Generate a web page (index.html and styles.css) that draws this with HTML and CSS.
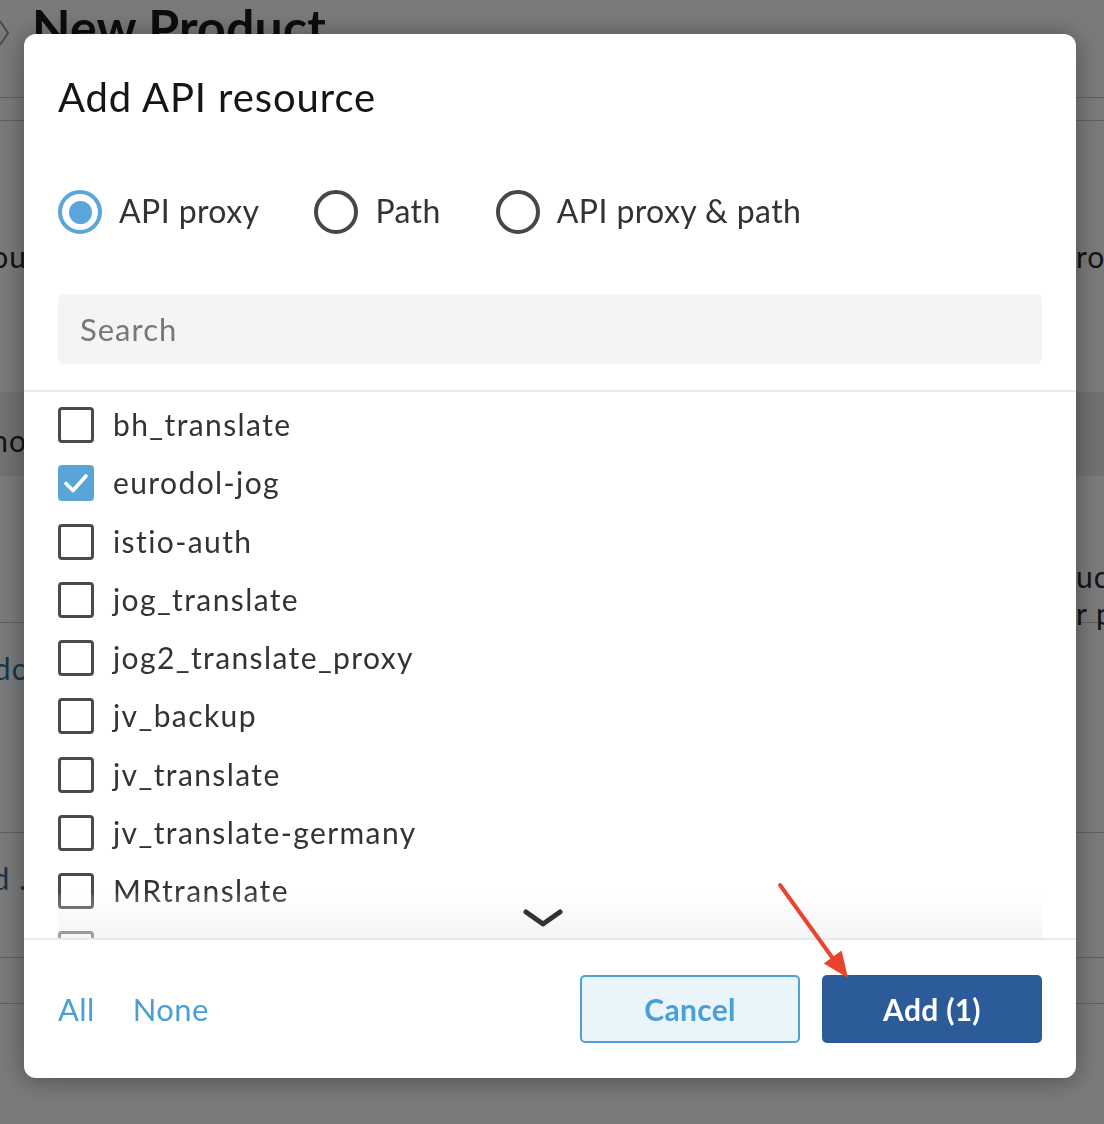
FILE: index.html
```html
<!DOCTYPE html>
<html lang="en">
<head>
<meta charset="utf-8">
<title>Add API resource</title>
<link rel="stylesheet" href="styles.css">
</head>
<body>
<div class="page">
  <div class="page-head">
    <svg class="crumb-chev" width="10" height="30" viewBox="0 0 10 30"><path d="M0 3 L8 15 L0 27" fill="none" stroke="#9a9a9a" stroke-width="2"/></svg>
    <h1 class="page-title">New Product</h1>
  </div>
  <div class="page-row r1"></div>
  <div class="page-row r2"><span class="edge-l">Product resou</span><span class="edge-r">roxies</span></div>
  <div class="page-row r3 band"><span class="edge-l">Anno</span></div>
  <div class="page-row r4"><span class="edge-r stack"><span>uc</span><span>r p</span></span></div>
  <div class="page-row r5"><span class="edge-l link">Adc</span></div>
  <div class="page-row r6"><span class="edge-l link">Add d .</span></div>
  <div class="page-row r7"></div>
</div>

<div class="overlay">
  <div class="dialog">
    <h2 class="dialog-title">Add API resource</h2>

    <div class="radios">
      <label class="radio"><span class="radio-circle checked"><span class="radio-dot"></span></span><span class="radio-label">API proxy</span></label>
      <label class="radio"><span class="radio-circle"></span><span class="radio-label">Path</span></label>
      <label class="radio"><span class="radio-circle"></span><span class="radio-label">API proxy &amp; path</span></label>
    </div>

    <div class="search"><input class="search-input" type="text" placeholder="Search"></div>

    <div class="list">
      <div class="item"><span class="cb"></span><span class="item-label">bh_translate</span></div>
      <div class="item"><span class="cb checked"><svg width="26" height="22" viewBox="0 0 26 22"><path d="M3 11.5 L10 18.5 L23 4" fill="none" stroke="#fff" stroke-width="3.6" stroke-linecap="round" stroke-linejoin="round"/></svg></span><span class="item-label">eurodol-jog</span></div>
      <div class="item"><span class="cb"></span><span class="item-label">istio-auth</span></div>
      <div class="item"><span class="cb"></span><span class="item-label">jog_translate</span></div>
      <div class="item"><span class="cb"></span><span class="item-label">jog2_translate_proxy</span></div>
      <div class="item"><span class="cb"></span><span class="item-label">jv_backup</span></div>
      <div class="item"><span class="cb"></span><span class="item-label">jv_translate</span></div>
      <div class="item"><span class="cb"></span><span class="item-label">jv_translate-germany</span></div>
      <div class="item"><span class="cb"></span><span class="item-label">MRtranslate</span></div>
      <div class="item"><span class="cb"></span><span class="item-label">no_target</span></div>
      <div class="fade">
        <svg width="40" height="20" viewBox="0 0 40 20"><path d="M3 3 L20 15 L37 3" fill="none" stroke="#333" stroke-width="5" stroke-linecap="round" stroke-linejoin="round"/></svg>
      </div>
    </div>

    <div class="footer">
      <div class="links"><a class="link-btn">All</a><a class="link-btn">None</a></div>
      <div class="actions">
        <button class="btn btn-cancel">Cancel</button>
        <button class="btn btn-add">Add (1)</button>
      </div>
    </div>

    <svg class="annot" viewBox="0 0 1052 1044" width="1052" height="1044">
      <line x1="756" y1="851" x2="810" y2="926" stroke="#e8442e" stroke-width="4" stroke-linecap="round"/>
      <polygon points="824,944 799.8,929.5 817.6,916.5" fill="#e8442e"/>
    </svg>
  </div>
</div>
</body>
</html>
```

FILE: styles.css
```css
html, body {
  margin: 0;
  padding: 0;
  height: 100%;
  overflow: hidden;
}

body {
  font-family: Lato, "Noto Sans", sans-serif;
  background: #ffffff;
  color: #333;
}

/* ---------- underlying page ---------- */
.page {
  width: 1104px;
  height: 1124px;
  overflow: hidden;
}

.page-head {
  height: 97px;
  border-bottom: 1px solid #c6c6c6;
  display: flex;
  align-items: flex-start;
}

.crumb-chev {
  margin-top: 18px;
  flex: none;
}

.page-title {
  margin: -2px 0 0 22px;
  font-size: 50px;
  line-height: 58px;
  font-weight: 700;
  letter-spacing: 0.2px;
  color: #1a1a1a;
  white-space: nowrap;
}

.page-row {
  display: flex;
  justify-content: space-between;
  align-items: flex-start;
  font-size: 30px;
  line-height: 36px;
  letter-spacing: 1px;
  color: #2a2a2a;
  white-space: nowrap;
}

.r1 { height: 22px; border-bottom: 1px solid #c6c6c6; }
.r2 { height: 271px; }
.r3 { height: 84px; }
.r4 { height: 146px; border-bottom: 1px solid #c6c6c6; }
.r5 { height: 209px; border-bottom: 1px solid #c6c6c6; }
.r6 { height: 124px; border-bottom: 1px solid #c6c6c6; }
.r7 { height: 45px; border-bottom: 1px solid #c6c6c6; }

.band { background: #ececec; }

.edge-l {
  display: flex;
  justify-content: flex-end;
  width: 27px;
  overflow: hidden;
  flex: none;
}

.r2 .edge-l, .r2 .edge-r { margin-top: 117px; }
.r3 .edge-l { margin-top: 30px; }
.r5 .edge-l { margin-top: 27px; }
.r6 .edge-l { margin-top: 27px; }

.edge-r {
  width: 28px;
  overflow: visible;
  flex: none;
  padding-left: 2px;
}

.r2 .edge-r { margin-left: auto; }

.edge-r.stack {
  display: flex;
  flex-direction: column;
  margin-left: auto;
  margin-top: 82px;
  line-height: 37px;
}

.link { color: #2f6e9e; }

/* ---------- overlay & dialog ---------- */
.overlay {
  position: fixed;
  inset: 0;
  background: rgba(0, 0, 0, 0.52);
  padding: 34px 28px 46px 24px;
  box-sizing: border-box;
  display: flex;
}

.dialog {
  flex: 1;
  position: relative;
  background: #ffffff;
  border-radius: 12px;
  display: flex;
  flex-direction: column;
  box-shadow: 0 2px 26px rgba(0, 0, 0, 0.38);
  overflow: hidden;
}

.dialog-title {
  margin: 0;
  padding: 39px 34px 0;
  font-size: 40px;
  line-height: 48px;
  font-weight: 400;
  letter-spacing: 0.9px;
  color: #151515;
}

.radios {
  margin-top: 69px;
  padding: 0 34px;
  height: 44px;
  display: flex;
  gap: 55px;
}

.radio {
  display: flex;
  align-items: center;
  gap: 17px;
}

.radio-circle {
  width: 44px;
  height: 44px;
  box-sizing: border-box;
  border: 4px solid #474747;
  border-radius: 50%;
  display: flex;
  align-items: center;
  justify-content: center;
}

.radio-circle.checked {
  border-color: #5aa6da;
}

.radio-dot {
  width: 23px;
  height: 23px;
  border-radius: 50%;
  background: #5aa6da;
}

.radio-label {
  font-size: 32px;
  line-height: 40px;
  padding-bottom: 3px;
  letter-spacing: 0.4px;
  color: #333;
  white-space: nowrap;
}

.search {
  margin: 60px 34px 0;
  height: 70px;
  background: #f4f4f4;
  border-radius: 6px;
  display: flex;
  align-items: center;
  padding: 0 22px;
}

.search-input {
  border: none;
  outline: none;
  background: transparent;
  width: 100%;
  padding: 0;
  font-family: Lato, "Noto Sans", sans-serif;
  font-size: 31px;
  letter-spacing: 1px;
  color: #333;
}

.search-input::placeholder {
  color: #777;
}

.list {
  margin-top: 26px;
  border-top: 2px solid #e9e9e9;
  flex: 1;
  min-height: 0;
  overflow: hidden;
  position: relative;
  padding-top: 4px;
}

.item {
  height: 58.25px;
  display: flex;
  align-items: center;
  gap: 19px;
  padding: 0 34px;
}

.cb {
  width: 36px;
  height: 36px;
  box-sizing: border-box;
  border: 3.5px solid #4a4a4a;
  border-radius: 4px;
  flex: none;
  display: flex;
  align-items: center;
  justify-content: center;
}

.cb.checked {
  background: #59a5d8;
  border-color: #59a5d8;
}

.item-label {
  font-size: 30px;
  line-height: 36px;
  padding-bottom: 2px;
  letter-spacing: 1.4px;
  color: #333;
  white-space: nowrap;
}

.fade {
  position: absolute;
  left: 34px;
  right: 34px;
  bottom: 0;
  height: 44px;
  background: linear-gradient(to bottom, rgba(250, 250, 250, 0.1), rgba(236, 236, 236, 0.55));
  display: flex;
  justify-content: center;
  align-items: flex-start;
  padding-top: 15px;
  padding-right: 14px;
  box-sizing: border-box;
}

.footer {
  height: 138px;
  flex: none;
  border-top: 2px solid #e9e9e9;
  display: flex;
  align-items: center;
  padding: 0 34px;
}

.links {
  display: flex;
  gap: 38px;
}

.link-btn {
  font-size: 31px;
  letter-spacing: 0.4px;
  color: #4a9fd4;
  cursor: pointer;
}

.actions {
  margin-left: auto;
  display: flex;
  gap: 22px;
}

.btn {
  width: 220px;
  height: 68px;
  border-radius: 5px;
  font-family: Lato, "Noto Sans", sans-serif;
  font-size: 30px;
  font-weight: 700;
  letter-spacing: 0.3px;
  cursor: pointer;
  box-sizing: border-box;
}

.btn-cancel {
  background: #e9f4fb;
  border: 2px solid #4ea1d4;
  color: #4a9fd4;
}

.btn-add {
  background: #2c5b9a;
  border: none;
  color: #ffffff;
}

.annot {
  position: absolute;
  left: 0;
  top: 0;
  pointer-events: none;
}
```
